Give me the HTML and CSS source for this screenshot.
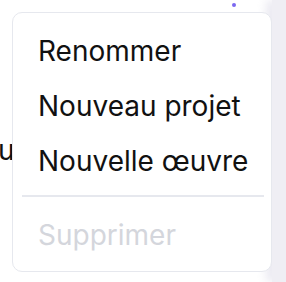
FILE: index.html
```html
<!DOCTYPE html>
<html lang="fr">
<head>
  <meta charset="UTF-8">
  <meta name="viewport" content="width=device-width, initial-scale=1.0">
  <title>Menu</title>
  <link rel="stylesheet" href="styles.css">
</head>
<body>
  <div class="page">
    <main class="main">
      <span class="dot"></span>
      <p class="behind">u</p>
    </main>
    <aside class="side"></aside>
  </div>

  <div class="menu">
    <button class="item">Renommer</button>
    <button class="item">Nouveau projet</button>
    <button class="item">Nouvelle œuvre</button>
    <div class="divider"></div>
    <button class="item" disabled>Supprimer</button>
  </div>
</body>
</html>
```

FILE: styles.css
```css
:root {
  --text-color: #111111;
  --muted: #d4d6dc;
  --border-color: #e6e8ee;
  --side-bg: #efeef4;
}

* {
  margin: 0;
  padding: 0;
  box-sizing: border-box;
  font-family: 'Inter', 'Noto Sans', sans-serif;
}

body {
  width: 286px;
  height: 282px;
  overflow: hidden;
  background-color: #ffffff;
  color: var(--text-color);
}

.page {
  display: flex;
  height: 100%;
}

.main {
  flex: 1;
  position: relative;
}

.dot {
  position: absolute;
  left: 232px;
  top: 3px;
  width: 4px;
  height: 4px;
  border-radius: 50%;
  background-color: #7b68f0;
}

.behind {
  padding-top: 133px;
  margin-left: -2px;
  font-size: 28px;
  line-height: 34px;
}

.side {
  width: 14px;
  background-color: var(--side-bg);
  box-shadow: -6px 0 10px rgba(220, 218, 232, 0.6);
}

.menu {
  position: absolute;
  left: 12px;
  top: 12px;
  width: 260px;
  height: 260px;
  padding: 10px 0 7px;
  background-color: #ffffff;
  border: 1.5px solid var(--border-color);
  border-radius: 10px;
  display: flex;
  flex-direction: column;
}

.item {
  display: block;
  flex-shrink: 0;
  width: 100%;
  height: 55px;
  padding: 0 25px;
  border: none;
  background: none;
  text-align: left;
  white-space: nowrap;
  font-size: 28px;
  line-height: 34px;
  color: var(--text-color);
  cursor: pointer;
}

.item:disabled {
  color: var(--muted);
  cursor: default;
}

.divider {
  flex-shrink: 0;
  height: 1.5px;
  margin: 7px 7px 11px 8.5px;
  background-color: var(--border-color);
}
```
